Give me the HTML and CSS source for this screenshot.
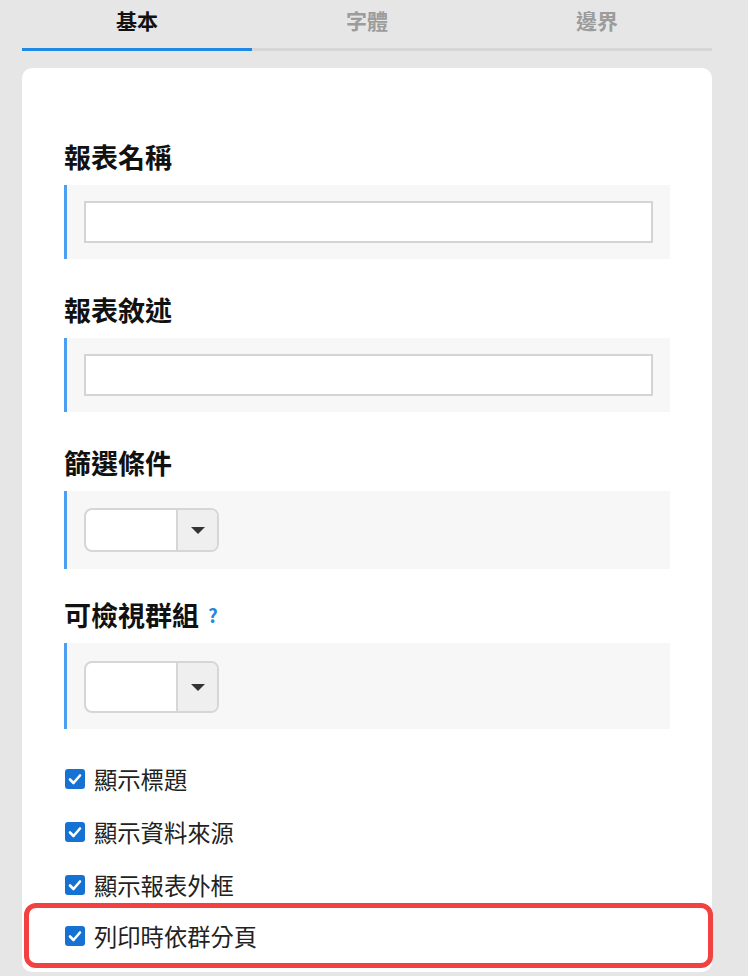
FILE: index.html
```html
<!DOCTYPE html>
<html lang="zh-Hant">
<head>
<meta charset="utf-8">
<title>報表設定</title>
<link rel="stylesheet" href="styles.css">
</head>
<body>
<div class="tabs">
  <div class="tab active">基本</div>
  <div class="tab">字體</div>
  <div class="tab">邊界</div>
</div>
<div class="card">
  <div class="field">
    <div class="label">報表名稱</div>
    <div class="section"><input class="text-input" type="text"></div>
  </div>
  <div class="field">
    <div class="label">報表敘述</div>
    <div class="section"><input class="text-input" type="text"></div>
  </div>
  <div class="field">
    <div class="label">篩選條件</div>
    <div class="section section-select">
      <div class="select"><span class="select-value"></span><span class="select-btn"><span class="caret"></span></span></div>
    </div>
  </div>
  <div class="field field-help">
    <div class="label">可檢視群組<span class="help">?</span></div>
    <div class="section section-tall">
      <div class="select select-tall"><span class="select-value"></span><span class="select-btn"><span class="caret"></span></span></div>
    </div>
  </div>
  <div class="checklist">
    <label class="check-row"><span class="checkbox"><svg width="20" height="20" viewBox="0 0 20 20"><polyline points="5,10.5 8.5,14 15,6.5" fill="none" stroke="#fff" stroke-width="2.6" stroke-linecap="round" stroke-linejoin="round"/></svg></span><span>顯示標題</span></label>
    <label class="check-row"><span class="checkbox"><svg width="20" height="20" viewBox="0 0 20 20"><polyline points="5,10.5 8.5,14 15,6.5" fill="none" stroke="#fff" stroke-width="2.6" stroke-linecap="round" stroke-linejoin="round"/></svg></span><span>顯示資料來源</span></label>
    <label class="check-row"><span class="checkbox"><svg width="20" height="20" viewBox="0 0 20 20"><polyline points="5,10.5 8.5,14 15,6.5" fill="none" stroke="#fff" stroke-width="2.6" stroke-linecap="round" stroke-linejoin="round"/></svg></span><span>顯示報表外框</span></label>
    <div class="highlight">
      <label class="check-row"><span class="checkbox"><svg width="20" height="20" viewBox="0 0 20 20"><polyline points="5,10.5 8.5,14 15,6.5" fill="none" stroke="#fff" stroke-width="2.6" stroke-linecap="round" stroke-linejoin="round"/></svg></span><span>列印時依群分頁</span></label>
    </div>
  </div>
</div>
</body>
</html>
```
FILE: styles.css
```css
body {
  margin: 0;
  background: #e6e6e6;
  font-family: "Noto Sans CJK TC", "Noto Sans", sans-serif;
}
.tabs {
  display: flex;
  width: 690px;
  margin-left: 22px;
}
.tab {
  flex: 1;
  text-align: center;
  font-size: 21px;
  font-weight: 700;
  color: #9c9c9c;
  height: 48px;
  line-height: 40px;
  border-bottom: 3px solid #d6d6d6;
}
.tab.active {
  color: #111;
  border-bottom-color: #1e88e5;
}
.card {
  margin: 17px 0 0 22px;
  width: 690px;
  box-sizing: border-box;
  background: #fff;
  border-radius: 10px;
  padding: 71px 42px 4px;
}
.field + .field {
  margin-top: 33px;
}
.field + .field.field-help {
  margin-top: 28px;
}
.label {
  display: flex;
  align-items: center;
  font-size: 27px;
  font-weight: 700;
  color: #111;
  line-height: 36px;
  height: 36px;
  margin-bottom: 10px;
}
.help {
  font-size: 19px;
  font-weight: 700;
  color: #2a88d6;
  margin-left: 9px;
}
.section {
  background: #f7f7f7;
  border-left: 3px solid #4b9ef0;
  padding: 16px 17px 16px;
}
.section-select {
  padding: 17px 17px 17px;
}
.section-tall {
  padding: 18px 17px 16px;
}
.text-input {
  display: block;
  width: 100%;
  box-sizing: border-box;
  height: 42px;
  margin: 0;
  padding: 0 8px;
  border: 2px solid #d4d4d4;
  background: #fff;
  outline: none;
}
.select {
  display: flex;
  width: 135px;
  height: 44px;
  box-sizing: border-box;
  border: 2px solid #d6d6d6;
  border-radius: 8px;
  overflow: hidden;
  background: #fff;
}
.select-tall {
  height: 52px;
}
.select-value {
  flex: none;
  width: 90px;
  border-right: 2px solid #d6d6d6;
}
.select-btn {
  flex: 1;
  background: #efefef;
  display: flex;
  align-items: center;
  justify-content: center;
}
.caret {
  width: 0;
  height: 0;
  border-left: 7px solid transparent;
  border-right: 7px solid transparent;
  border-top: 7px solid #333;
}
.checklist {
  margin-top: 23px;
}
.check-row {
  display: flex;
  align-items: center;
  gap: 9px;
  height: 53px;
  padding-left: 1px;
  font-size: 23.3px;
  color: #222;
}
.checkbox {
  flex: none;
  width: 20px;
  height: 20px;
  border-radius: 3px;
  background: #1572d3;
  display: flex;
}
.highlight {
  margin: -8px -43px 0 -40px;
  border: 5px solid #f24141;
  border-radius: 12px;
}
.highlight .check-row {
  height: 55px;
  padding-left: 36px;
}
```
